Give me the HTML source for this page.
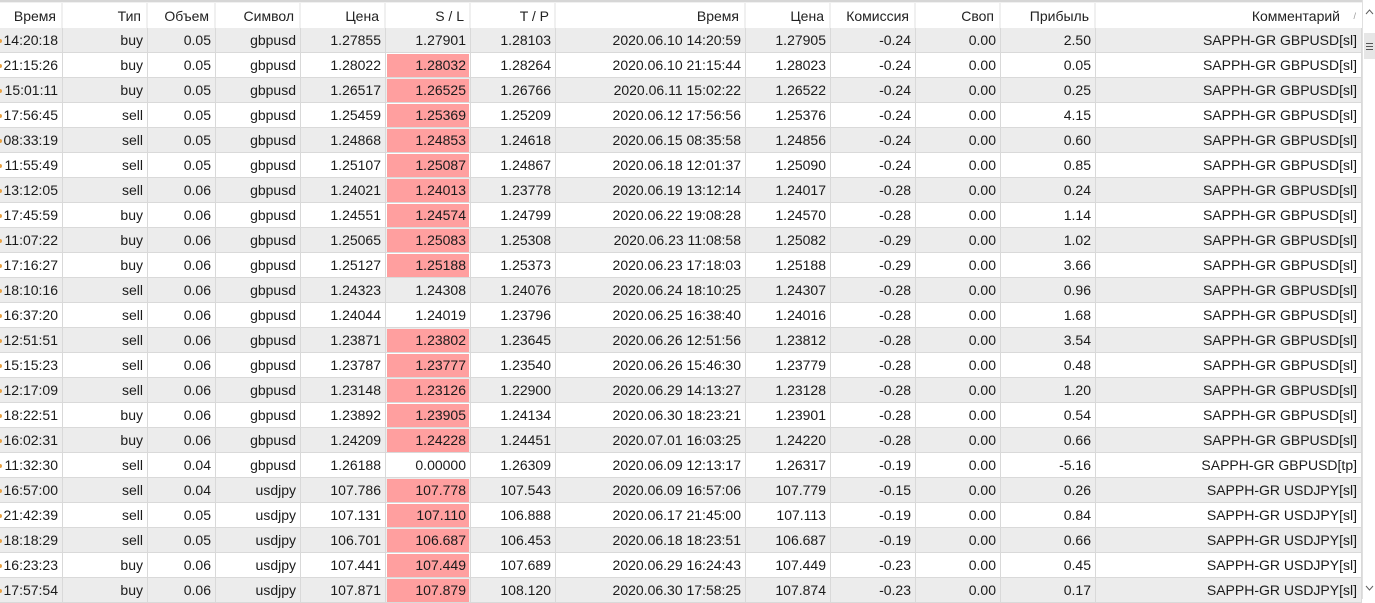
<!DOCTYPE html>
<html><head><meta charset="utf-8"><style>
*{margin:0;padding:0;box-sizing:border-box}
body{width:1375px;height:599px;overflow:hidden;background:#fff;font-family:"Liberation Sans","DejaVu Sans",sans-serif;font-size:14px;color:#1b1b1b;position:relative}
.hd{position:absolute;left:0;top:0;width:1362px;height:28px;border-top:2px solid #d6d6d6;background:#f0f0f0}
.hd div{position:absolute;top:1px;height:25px;background:#fff;text-align:right;padding-right:5px;line-height:26px;color:#222}
.r{position:absolute;left:0;width:1362px;height:25px;border-bottom:1px solid #d9d9d9}
.g{background:#ececec}.w{background:#fff}
.r div{position:absolute;top:0;height:24px;line-height:25px;text-align:right;padding-right:4px;border-right:1px solid #d9d9d9;white-space:nowrap}
.c1{left:0;width:63px}.c2{left:63px;width:85px}.c3{left:148px;width:68px}.c4{left:216px;width:85px}.c5{left:301px;width:85px}.c6{left:386px;width:85px}.c7{left:471px;width:85px}.c8{left:556px;width:190px}.c9{left:746px;width:85px}.c10{left:831px;width:85px}.c11{left:916px;width:85px}.c12{left:1001px;width:95px}.c13{left:1096px;width:266px}
.hd .c1{width:61px}.hd .c2{width:83px}.hd .c3{width:66px}.hd .c4{width:83px}.hd .c5{width:83px}.hd .c6{width:83px}.hd .c7{width:83px}.hd .c8{width:188px}.hd .c9{width:83px}.hd .c10{width:83px}.hd .c11{width:83px}.hd .c12{width:93px}.hd .c13{width:266px;padding-right:22px}
.r .c6.s{background:linear-gradient(#ff9f9f,#ff9f9f) no-repeat 1px 1px/82px 23px}
.r .c1::before{content:"";position:absolute;left:-2px;top:11px;width:4px;height:4px;border-radius:2px;background:#e8a040}
.sb{position:absolute;left:1362px;top:0;width:13px;height:599px;background:#fff;border-left:1px solid #e0e0e0}
</style></head><body>
<div class="hd"><div class="c1">Время</div><div class="c2">Тип</div><div class="c3">Объем</div><div class="c4">Символ</div><div class="c5">Цена</div><div class="c6">S / L</div><div class="c7">T / P</div><div class="c8">Время</div><div class="c9">Цена</div><div class="c10">Комиссия</div><div class="c11">Своп</div><div class="c12">Прибыль</div><div class="c13">Комментарий<span style="position:absolute;right:6px;top:0;font-size:9px;color:#999">/</span></div></div>

<div class="r g" style="top:28px"><div class="c1">14:20:18</div><div class="c2">buy</div><div class="c3">0.05</div><div class="c4">gbpusd</div><div class="c5">1.27855</div><div class="c6">1.27901</div><div class="c7">1.28103</div><div class="c8">2020.06.10 14:20:59</div><div class="c9">1.27905</div><div class="c10">-0.24</div><div class="c11">0.00</div><div class="c12">2.50</div><div class="c13">SAPPH-GR GBPUSD[sl]</div></div>
<div class="r w" style="top:53px"><div class="c1">21:15:26</div><div class="c2">buy</div><div class="c3">0.05</div><div class="c4">gbpusd</div><div class="c5">1.28022</div><div class="c6 s">1.28032</div><div class="c7">1.28264</div><div class="c8">2020.06.10 21:15:44</div><div class="c9">1.28023</div><div class="c10">-0.24</div><div class="c11">0.00</div><div class="c12">0.05</div><div class="c13">SAPPH-GR GBPUSD[sl]</div></div>
<div class="r g" style="top:78px"><div class="c1">15:01:11</div><div class="c2">buy</div><div class="c3">0.05</div><div class="c4">gbpusd</div><div class="c5">1.26517</div><div class="c6 s">1.26525</div><div class="c7">1.26766</div><div class="c8">2020.06.11 15:02:22</div><div class="c9">1.26522</div><div class="c10">-0.24</div><div class="c11">0.00</div><div class="c12">0.25</div><div class="c13">SAPPH-GR GBPUSD[sl]</div></div>
<div class="r w" style="top:103px"><div class="c1">17:56:45</div><div class="c2">sell</div><div class="c3">0.05</div><div class="c4">gbpusd</div><div class="c5">1.25459</div><div class="c6 s">1.25369</div><div class="c7">1.25209</div><div class="c8">2020.06.12 17:56:56</div><div class="c9">1.25376</div><div class="c10">-0.24</div><div class="c11">0.00</div><div class="c12">4.15</div><div class="c13">SAPPH-GR GBPUSD[sl]</div></div>
<div class="r g" style="top:128px"><div class="c1">08:33:19</div><div class="c2">sell</div><div class="c3">0.05</div><div class="c4">gbpusd</div><div class="c5">1.24868</div><div class="c6 s">1.24853</div><div class="c7">1.24618</div><div class="c8">2020.06.15 08:35:58</div><div class="c9">1.24856</div><div class="c10">-0.24</div><div class="c11">0.00</div><div class="c12">0.60</div><div class="c13">SAPPH-GR GBPUSD[sl]</div></div>
<div class="r w" style="top:153px"><div class="c1">11:55:49</div><div class="c2">sell</div><div class="c3">0.05</div><div class="c4">gbpusd</div><div class="c5">1.25107</div><div class="c6 s">1.25087</div><div class="c7">1.24867</div><div class="c8">2020.06.18 12:01:37</div><div class="c9">1.25090</div><div class="c10">-0.24</div><div class="c11">0.00</div><div class="c12">0.85</div><div class="c13">SAPPH-GR GBPUSD[sl]</div></div>
<div class="r g" style="top:178px"><div class="c1">13:12:05</div><div class="c2">sell</div><div class="c3">0.06</div><div class="c4">gbpusd</div><div class="c5">1.24021</div><div class="c6 s">1.24013</div><div class="c7">1.23778</div><div class="c8">2020.06.19 13:12:14</div><div class="c9">1.24017</div><div class="c10">-0.28</div><div class="c11">0.00</div><div class="c12">0.24</div><div class="c13">SAPPH-GR GBPUSD[sl]</div></div>
<div class="r w" style="top:203px"><div class="c1">17:45:59</div><div class="c2">buy</div><div class="c3">0.06</div><div class="c4">gbpusd</div><div class="c5">1.24551</div><div class="c6 s">1.24574</div><div class="c7">1.24799</div><div class="c8">2020.06.22 19:08:28</div><div class="c9">1.24570</div><div class="c10">-0.28</div><div class="c11">0.00</div><div class="c12">1.14</div><div class="c13">SAPPH-GR GBPUSD[sl]</div></div>
<div class="r g" style="top:228px"><div class="c1">11:07:22</div><div class="c2">buy</div><div class="c3">0.06</div><div class="c4">gbpusd</div><div class="c5">1.25065</div><div class="c6 s">1.25083</div><div class="c7">1.25308</div><div class="c8">2020.06.23 11:08:58</div><div class="c9">1.25082</div><div class="c10">-0.29</div><div class="c11">0.00</div><div class="c12">1.02</div><div class="c13">SAPPH-GR GBPUSD[sl]</div></div>
<div class="r w" style="top:253px"><div class="c1">17:16:27</div><div class="c2">buy</div><div class="c3">0.06</div><div class="c4">gbpusd</div><div class="c5">1.25127</div><div class="c6 s">1.25188</div><div class="c7">1.25373</div><div class="c8">2020.06.23 17:18:03</div><div class="c9">1.25188</div><div class="c10">-0.29</div><div class="c11">0.00</div><div class="c12">3.66</div><div class="c13">SAPPH-GR GBPUSD[sl]</div></div>
<div class="r g" style="top:278px"><div class="c1">18:10:16</div><div class="c2">sell</div><div class="c3">0.06</div><div class="c4">gbpusd</div><div class="c5">1.24323</div><div class="c6">1.24308</div><div class="c7">1.24076</div><div class="c8">2020.06.24 18:10:25</div><div class="c9">1.24307</div><div class="c10">-0.28</div><div class="c11">0.00</div><div class="c12">0.96</div><div class="c13">SAPPH-GR GBPUSD[sl]</div></div>
<div class="r w" style="top:303px"><div class="c1">16:37:20</div><div class="c2">sell</div><div class="c3">0.06</div><div class="c4">gbpusd</div><div class="c5">1.24044</div><div class="c6">1.24019</div><div class="c7">1.23796</div><div class="c8">2020.06.25 16:38:40</div><div class="c9">1.24016</div><div class="c10">-0.28</div><div class="c11">0.00</div><div class="c12">1.68</div><div class="c13">SAPPH-GR GBPUSD[sl]</div></div>
<div class="r g" style="top:328px"><div class="c1">12:51:51</div><div class="c2">sell</div><div class="c3">0.06</div><div class="c4">gbpusd</div><div class="c5">1.23871</div><div class="c6 s">1.23802</div><div class="c7">1.23645</div><div class="c8">2020.06.26 12:51:56</div><div class="c9">1.23812</div><div class="c10">-0.28</div><div class="c11">0.00</div><div class="c12">3.54</div><div class="c13">SAPPH-GR GBPUSD[sl]</div></div>
<div class="r w" style="top:353px"><div class="c1">15:15:23</div><div class="c2">sell</div><div class="c3">0.06</div><div class="c4">gbpusd</div><div class="c5">1.23787</div><div class="c6 s">1.23777</div><div class="c7">1.23540</div><div class="c8">2020.06.26 15:46:30</div><div class="c9">1.23779</div><div class="c10">-0.28</div><div class="c11">0.00</div><div class="c12">0.48</div><div class="c13">SAPPH-GR GBPUSD[sl]</div></div>
<div class="r g" style="top:378px"><div class="c1">12:17:09</div><div class="c2">sell</div><div class="c3">0.06</div><div class="c4">gbpusd</div><div class="c5">1.23148</div><div class="c6 s">1.23126</div><div class="c7">1.22900</div><div class="c8">2020.06.29 14:13:27</div><div class="c9">1.23128</div><div class="c10">-0.28</div><div class="c11">0.00</div><div class="c12">1.20</div><div class="c13">SAPPH-GR GBPUSD[sl]</div></div>
<div class="r w" style="top:403px"><div class="c1">18:22:51</div><div class="c2">buy</div><div class="c3">0.06</div><div class="c4">gbpusd</div><div class="c5">1.23892</div><div class="c6 s">1.23905</div><div class="c7">1.24134</div><div class="c8">2020.06.30 18:23:21</div><div class="c9">1.23901</div><div class="c10">-0.28</div><div class="c11">0.00</div><div class="c12">0.54</div><div class="c13">SAPPH-GR GBPUSD[sl]</div></div>
<div class="r g" style="top:428px"><div class="c1">16:02:31</div><div class="c2">buy</div><div class="c3">0.06</div><div class="c4">gbpusd</div><div class="c5">1.24209</div><div class="c6 s">1.24228</div><div class="c7">1.24451</div><div class="c8">2020.07.01 16:03:25</div><div class="c9">1.24220</div><div class="c10">-0.28</div><div class="c11">0.00</div><div class="c12">0.66</div><div class="c13">SAPPH-GR GBPUSD[sl]</div></div>
<div class="r w" style="top:453px"><div class="c1">11:32:30</div><div class="c2">sell</div><div class="c3">0.04</div><div class="c4">gbpusd</div><div class="c5">1.26188</div><div class="c6">0.00000</div><div class="c7">1.26309</div><div class="c8">2020.06.09 12:13:17</div><div class="c9">1.26317</div><div class="c10">-0.19</div><div class="c11">0.00</div><div class="c12">-5.16</div><div class="c13">SAPPH-GR GBPUSD[tp]</div></div>
<div class="r g" style="top:478px"><div class="c1">16:57:00</div><div class="c2">sell</div><div class="c3">0.04</div><div class="c4">usdjpy</div><div class="c5">107.786</div><div class="c6 s">107.778</div><div class="c7">107.543</div><div class="c8">2020.06.09 16:57:06</div><div class="c9">107.779</div><div class="c10">-0.15</div><div class="c11">0.00</div><div class="c12">0.26</div><div class="c13">SAPPH-GR USDJPY[sl]</div></div>
<div class="r w" style="top:503px"><div class="c1">21:42:39</div><div class="c2">sell</div><div class="c3">0.05</div><div class="c4">usdjpy</div><div class="c5">107.131</div><div class="c6 s">107.110</div><div class="c7">106.888</div><div class="c8">2020.06.17 21:45:00</div><div class="c9">107.113</div><div class="c10">-0.19</div><div class="c11">0.00</div><div class="c12">0.84</div><div class="c13">SAPPH-GR USDJPY[sl]</div></div>
<div class="r g" style="top:528px"><div class="c1">18:18:29</div><div class="c2">sell</div><div class="c3">0.05</div><div class="c4">usdjpy</div><div class="c5">106.701</div><div class="c6 s">106.687</div><div class="c7">106.453</div><div class="c8">2020.06.18 18:23:51</div><div class="c9">106.687</div><div class="c10">-0.19</div><div class="c11">0.00</div><div class="c12">0.66</div><div class="c13">SAPPH-GR USDJPY[sl]</div></div>
<div class="r w" style="top:553px"><div class="c1">16:23:23</div><div class="c2">buy</div><div class="c3">0.06</div><div class="c4">usdjpy</div><div class="c5">107.441</div><div class="c6 s">107.449</div><div class="c7">107.689</div><div class="c8">2020.06.29 16:24:43</div><div class="c9">107.449</div><div class="c10">-0.23</div><div class="c11">0.00</div><div class="c12">0.45</div><div class="c13">SAPPH-GR USDJPY[sl]</div></div>
<div class="r g" style="top:578px"><div class="c1">17:57:54</div><div class="c2">buy</div><div class="c3">0.06</div><div class="c4">usdjpy</div><div class="c5">107.871</div><div class="c6 s">107.879</div><div class="c7">108.120</div><div class="c8">2020.06.30 17:58:25</div><div class="c9">107.874</div><div class="c10">-0.23</div><div class="c11">0.00</div><div class="c12">0.17</div><div class="c13">SAPPH-GR USDJPY[sl]</div></div>

<div class="sb">
<svg width="13" height="599" style="position:absolute;left:0;top:0">
<path d="M3 14 L6.5 10 L10 14" fill="none" stroke="#606060" stroke-width="1"/>
<rect x="1" y="33" width="11" height="26" fill="#e6e6e6"/>
<path d="M3 43.5h7M3 46.5h7M3 49.5h7" stroke="#555" stroke-width="1"/>
<path d="M3 586 L6.5 590 L10 586" fill="none" stroke="#606060" stroke-width="1"/>
</svg>
</div>
</body></html>
